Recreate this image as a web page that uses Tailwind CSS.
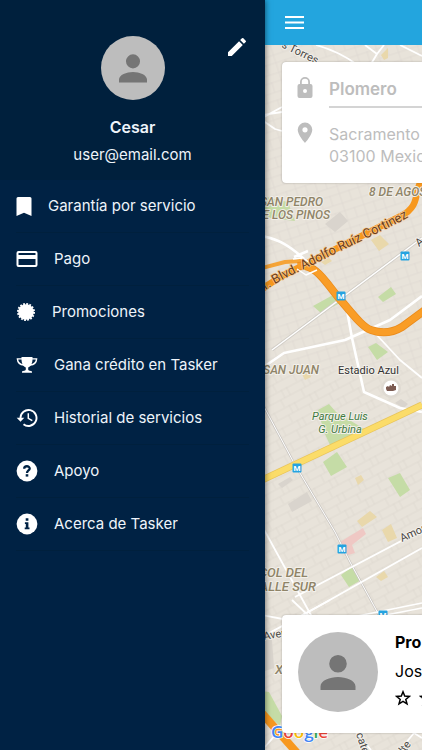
<!DOCTYPE html>
<html lang="es">
<head>
  <meta charset="UTF-8" />
  <meta name="viewport" content="width=device-width, initial-scale=1.0" />
  <title>Tasker</title>
  <script src="https://cdn.jsdelivr.net/npm/@tailwindcss/browser@4"></script>
</head>
<body class="flex min-h-screen overflow-x-hidden bg-[#002244] font-['Inter',sans-serif]">

  <!-- Menu lateral -->
  <aside class="relative z-10 w-[265px] shrink-0 bg-[#002244] text-[#eef4fa] shadow-[0_0_6px_rgba(0,0,0,0.6)]">
    <header class="relative flex h-[180px] flex-col items-center bg-[#00203d] pt-9">
      <svg class="size-16" viewBox="0 0 80 80">
        <circle cx="40" cy="40" r="40" fill="#bdbdbd" />
        <path fill="#757575" d="M40 40.500a8.800 8.800 0 1 0 0-17.600 8.800 8.800 0 0 0 0 17.600zm0 4.500c-8 0-17.500 3.500-17.500 9.500v3.500h35v-3.500c0-6-9.500-9.500-17.500-9.500z" />
      </svg>
      <h1 class="mt-[15px] text-base/6 font-semibold">Cesar</h1>
      <p class="mt-1 text-[15px]/6">user@email.com</p>
      <button aria-label="Editar perfil" class="absolute top-[35px] right-4 text-white">
        <svg class="size-6" viewBox="0 0 24 24" fill="currentColor"><path d="M3 17.250V21h3.750L17.810 9.940l-3.750-3.750L3 17.250zM20.710 7.040a1 1 0 0 0 0-1.410l-2.340-2.340a1 1 0 0 0-1.410 0l-1.830 1.830 3.750 3.750 1.830-1.830z" /></svg>
      </button>
    </header>

    <nav class="px-4 text-[15px]">
      <a href="#garantia" class="flex h-[53px] items-center gap-4 border-b border-[#00203d]">
        <svg class="h-[19px] w-4" viewBox="0 0 16 19" fill="#fff"><path d="M2 0h12a1.500 1.500 0 0 1 1.500 1.500V19L8 15.700.5 19V1.500A1.500 1.500 0 0 1 2 0z" /></svg>
        Garantía por servicio
      </a>
      <a href="#pago" class="flex h-[53px] items-center gap-4 border-b border-[#00203d]">
        <svg class="h-[18px] w-[22px]" viewBox="0 0 22 18"><path fill="#fff" fill-rule="evenodd" d="M2.500 1h17a2 2 0 0 1 2 2v12a2 2 0 0 1-2 2h-17a2 2 0 0 1-2-2V3a2 2 0 0 1 2-2zm0 2v2h17V3zm0 6v6h17V9z" /></svg>
        Pago
      </a>
      <a href="#promociones" class="flex h-[53px] items-center gap-4 border-b border-[#00203d]">
        <svg class="size-5" viewBox="0 0 20 20">
          <circle cx="10" cy="10" r="7.800" fill="#fff" />
          <circle cx="10" cy="10" r="8" fill="none" stroke="#fff" stroke-width="2" stroke-dasharray="1.800 1.342" />
        </svg>
        Promociones
      </a>
      <a href="#credito" class="flex h-[53px] items-center gap-4 border-b border-[#00203d]">
        <svg class="h-[18px] w-[22px]" viewBox="0 0 22 18">
          <path fill="#fff" d="M5.500 1h11v2c0 5-2 7.500-4.300 8.500v2c0 .8 1 1.200 2.800 1.500.8.100 1 .5 1 1v.8H6V16c0-.5.200-.9 1-1 1.800-.3 2.800-.7 2.800-1.500v-2C7.500 10.500 5.500 8 5.500 3z" />
          <path fill="none" stroke="#fff" stroke-width="1.400" d="M6 2.900H1.400C1.600 6.500 4 8.700 8 9M16 2.900h4.600C20.400 6.500 18 8.700 14 9" />
        </svg>
        Gana crédito en Tasker
      </a>
      <a href="#historial" class="flex h-[53px] items-center gap-4 border-b border-[#00203d]">
        <svg class="h-5 w-[22px]" viewBox="0 0 22 20">
          <path fill="none" stroke="#fff" stroke-width="1.900" d="M4.500 11v-1a8 8 0 1 1 3 6.200" />
          <path fill="#fff" d="M.7 9.800h7.600l-3.800 4z" />
          <path fill="none" stroke="#fff" stroke-width="1.500" d="M12.300 5.300v5l4 2.400" />
        </svg>
        Historial de servicios
      </a>
      <a href="#apoyo" class="flex h-[53px] items-center gap-4 border-b border-[#00203d]">
        <svg class="size-[22px]" viewBox="0 0 22 22">
          <circle cx="11" cy="11" r="10.400" fill="#fff" />
          <path fill="none" stroke="#002244" stroke-width="2.300" d="M8.200 8.700c0-3.300 5.500-3.200 5.500-.2 0 2-2.700 2-2.700 4.500" />
          <path fill="#002244" d="M9.700 14.200h2.600v2.400H9.700z" />
        </svg>
        Apoyo
      </a>
      <a href="#acerca" class="flex h-[53px] items-center gap-4 border-b border-[#00203d]">
        <svg class="size-[22px]" viewBox="0 0 22 22">
          <circle cx="11" cy="11" r="10.400" fill="#fff" />
          <path fill="#002244" d="M9.700 5.300h2.700v2.400H9.700zM8.900 9.200h3.500v5.300h1.100v1.700H8.700v-1.700h1.100v-3.600h-.9z" />
        </svg>
        Acerca de Tasker
      </a>
    </nav>
  </aside>

  <!-- Pantalla principal -->
  <main class="flex min-w-0 flex-1 flex-col overflow-hidden">
    <header class="flex h-[45px] shrink-0 items-center bg-[#23a5de] pl-5">
      <button aria-label="Menú" class="text-white">
        <svg class="h-[13px] w-[19px]" viewBox="0 0 19 13" fill="currentColor"><path d="M0 0h19v2H0zM0 5.500h19v2H0zM0 11h19v2H0z" /></svg>
      </button>
    </header>

    <div class="relative flex flex-1 flex-col justify-between bg-[#e8e3da] pt-[17px] pb-[17px] pl-[17px]">
      <!-- Mapa -->
      <svg class="absolute inset-0 size-full" viewBox="265 45 157 705" preserveAspectRatio="xMinYMin slice" font-family="Roboto, sans-serif">
        <defs>
          <pattern id="streets" width="23" height="17" patternUnits="userSpaceOnUse" patternTransform="rotate(-28)">
            <path d="M0 1H23M0 9H23M2 0V9M14 9V17M19 0V9" fill="none" stroke="#dcd7cf" stroke-width=".7" />
          </pattern>
          <pattern id="streetsTop" width="20" height="18" patternUnits="userSpaceOnUse" patternTransform="rotate(-18)">
            <path d="M0 1H20M0 11H20M3 0V18M13 0V11" fill="none" stroke="#ded9d1" stroke-width=".7" />
          </pattern>
          <path id="blvd" d="M260 295C268 287 280 281 300 271L400 222L412 215" />
          <g id="metro">
            <rect x="-4.500" y="-4.500" width="9" height="9" rx="1" fill="#25a3e0" />
            <text y="3" text-anchor="middle" font-size="8" font-weight="700" fill="#fff">M</text>
          </g>
        </defs>
        <rect x="265" y="45" width="900" height="325" fill="url(#streetsTop)" />
        <rect x="265" y="370" width="900" height="900" fill="url(#streets)" />

        <!-- parques y manzanas -->
        <g fill="#c5dca6">
          <path d="M262 196L288 202L295 221L262 217z" />
          <path d="M313 306L333 295L340 303L321 313zM378 297L391 287L396 294L383 302zM368 347L376 343L388 352L377 360z" />
          <path d="M318 410L329 404L336 412L366 430L330 445L324 432zM323 462L337 452L347 467L331 476zM388 478L400 473L410 490L400 497zM341 575L352 567L361 580L349 587z" />
          <path d="M262 691L269 692L282 716L280 726L262 710z" />
        </g>
        <g fill="#e9d8ab">
          <path d="M371 240L380 235L389 244L379 251zM321 262L329 258L332 261L325 265zM357 521L370 511L377 517L362 527zM382 530L391 524L397 538L388 542zM376 577L384 571L388 577L381 581zM302 374L309 371L311 377L305 380zM381 55L388 48L388 58L384 60z" />
          <path d="M355 478L361 475L364 480L358 485z" />
        </g>
        <path fill="#efc8c4" d="M340 542L363 528L366 534L352 545L355 553L345 556z" />
        <g fill="#d9d4cd">
          <path d="M325 224L340 212L348 221L335 232zM288 504L307 492L312 501L292 512zM278 484L290 477L293 480L282 488zM395 403L401 399L408 404L404 408z" />
          <path d="M262 640L272 640L274 668L262 672z" />
        </g>

        <!-- calles secundarias -->
        <g fill="none">
          <path d="M262 403L294 463L335 532L350 562L380 617" stroke="#c9c5c0" stroke-width="2.400" />
          <path d="M272 350L422 238" stroke="#d0ccc5" stroke-width="3" />
        </g>
        <g fill="none" stroke="#fff" stroke-width="1.800" stroke-linejoin="round">
          <path d="M272 350L422 238" stroke-width="1.400" />
          <path d="M262 403L294 463L335 532L350 562L380 617" stroke-width="1" />
          <path d="M262 236C280 240 290 246 304 259M294 257L308 251" stroke-width="2.600" />
          <path d="M262 368L284 353L345 340L390 320L422 296" stroke-width="2.600" />
          <path d="M346 305L352 338L364 392L400 408L422 412" stroke-width="2.600" />
          <path d="M374 332L400 360L422 378" />
          <path d="M262 526L312 617M295 597L422 530M296 619L422 548" />
          <path d="M338 620L422 603M345 623L422 608" stroke-width="1.600" />
          <path d="M316 45C330 49 345 56 356 64M365 45L377 54L384 45M377 54L371 64M400 45L422 56" />
          <path d="M262 118L282 107M262 120L275 129L282 131M262 115L282 112" />
          <path d="M292 600L312 619M262 637L330 600M265 747L282 727M400 750L414 733L422 738M355 731L371 750M262 615L288 620" />
        </g>

        <!-- avenidas -->
        <g fill="none" stroke-linejoin="round">
          <path d="M262 480L422 405" stroke="#e8c45a" stroke-width="7" />
          <path d="M262 480L422 405" stroke="#fbdc69" stroke-width="5.500" />
          <path d="M262 268L285 262L300 261L312 267" stroke="#f5a437" stroke-width="4" />
          <path d="M262 289L280 277L300 267L401 216C413 210 416 202 417 191L421 180" stroke="#f7981f" stroke-width="6.500" />
          <path d="M298 266C315 263 325 281 338 297C352 313 362 327 371 330C382 334 392 333 402 327L425 310" stroke="#ea8b1c" stroke-width="8" />
          <path d="M298 266C315 263 325 281 338 297C352 313 362 327 371 330C382 334 392 333 402 327L425 310" stroke="#f99d27" stroke-width="6.500" />
          <path d="M297 269L306 275L317 270M293 259L302 258L309 262" stroke="#fff" stroke-width="1.500" />
          <path d="M260 711L298 754" stroke="#f7981f" stroke-width="8" />
        </g>

        <use href="#metro" x="405" y="256" />
        <use href="#metro" x="341" y="296" />
        <use href="#metro" x="297" y="468" />
        <use href="#metro" x="342" y="549" />
        <use href="#metro" x="383" y="615" />

        <!-- estadio -->
        <circle cx="391" cy="388" r="10" fill="#dfdad2" />
        <circle cx="391" cy="388" r="7.500" fill="#fff" />
        <path fill="#7c5b52" d="M386 387l2-1 1 1 1-2 2 1v-2h2v2l2 0v4l-3 1h-6l-1-2z" />

        <!-- etiquetas -->
        <g stroke="#f3f0ea" stroke-width="2" stroke-linejoin="round" paint-order="stroke" fill="#8f8468" font-size="12" font-style="italic" font-weight="500">
          <text x="323" y="206" text-anchor="end">SAN PEDRO</text>
          <text x="330" y="219" text-anchor="end">DE LOS PINOS</text>
          <text x="369" y="196">8 DE AGOSTO</text>
          <text x="319" y="374" text-anchor="end">SAN JUAN</text>
          <text x="308" y="577" text-anchor="end" font-size="13">COL DEL</text>
          <text x="316" y="591" text-anchor="end" font-size="13">VALLE SUR</text>
          <text x="275" y="674" font-size="13">X</text>
          <g fill="#3f7a41" font-size="11" font-weight="400" text-anchor="middle">
            <text x="340" y="420">Parque Luis</text>
            <text x="340" y="433">G. Urbina</text>
          </g>
          <g fill="#484644" font-style="normal" font-weight="400" font-size="11">
            <text x="338" y="374" fill="#333">Estadio Azul</text>
            <text transform="translate(281 47) rotate(26)">s Torres</text>
            <text transform="translate(402 542) rotate(-25)">Amores</text>
            <text transform="translate(419 247) rotate(-40)">A</text>
            <text transform="translate(264 640) rotate(-10)">Aven</text>
            <text transform="translate(356 734) rotate(72)">cate</text>
            <text transform="translate(404 754) rotate(-52)">lte</text>
          </g>
          <text font-size="13" font-style="normal" font-weight="400" fill="#6b3c1a" stroke="#f8c88a" stroke-width="1.500"><textPath href="#blvd">nf. Blvd. Adolfo Ruíz Cortinez</textPath></text>
        </g>

        <text x="271" y="738" font-family="Open Sans, sans-serif" font-size="17" font-weight="600" stroke="#fff" stroke-width="1.500" paint-order="stroke"><tspan fill="#4285f4">G</tspan><tspan fill="#ea4335">o</tspan><tspan fill="#fbbc05">o</tspan><tspan fill="#4285f4">g</tspan><tspan fill="#34a853">l</tspan><tspan fill="#ea4335">e</tspan></text>
      </svg>

      <!-- Servicio y dirección -->
      <section class="relative h-[121px] rounded-l-sm bg-white pt-[14px] pl-[15px] text-[#bdbdbd] shadow-[0_0_2px_rgba(0,0,0,0.3)]">
        <div class="flex gap-4">
          <svg class="mt-px h-[21px] w-4 shrink-0" viewBox="0 0 16 21"><path fill="#bdbdbd" fill-rule="evenodd" d="M8 0a5 5 0 0 1 5 5v2h.5a2 2 0 0 1 2 2v10a2 2 0 0 1-2 2h-11a2 2 0 0 1-2-2V9a2 2 0 0 1 2-2H3V5a5 5 0 0 1 5-5zm0 1.800A3.200 3.200 0 0 0 4.800 5v2h6.400V5A3.200 3.200 0 0 0 8 1.800zM8 12a2 2 0 1 0 0 4 2 2 0 0 0 0-4z" /></svg>
          <input type="text" aria-label="Servicio" value="Plomero" readonly class="h-8 min-w-0 flex-1 border-b-2 border-[#d4d4d4] pb-1 text-[17px]/6 font-semibold outline-none" />
        </div>
        <div class="mt-3.5 flex gap-4">
          <svg class="h-[21px] w-4 shrink-0" viewBox="0 0 16 21"><path fill="#bdbdbd" fill-rule="evenodd" d="M8 .5a7.300 7.300 0 0 1 7.300 7.300C15.300 13 8 21 8 21S.7 13 .7 7.800A7.300 7.300 0 0 1 8 .5zm0 4.700a2.600 2.600 0 1 0 0 5.200 2.600 2.600 0 0 0 0-5.200z" /></svg>
          <p class="mt-px text-base/[22px] whitespace-nowrap">Sacramento<br />03100 Mexico</p>
        </div>
      </section>

      <!-- Profesional -->
      <section class="relative flex h-[118px] items-start gap-[17px] overflow-hidden rounded-l-sm bg-white pt-[17px] pl-4 shadow-[0_0_2px_rgba(0,0,0,0.3)]">
        <svg class="size-20 shrink-0" viewBox="0 0 80 80">
          <circle cx="40" cy="40" r="40" fill="#bdbdbd" />
          <path fill="#757575" d="M40 40.500a8.800 8.800 0 1 0 0-17.600 8.800 8.800 0 0 0 0 17.600zm0 4.500c-8 0-17.500 3.500-17.500 9.500v3.500h35v-3.500c0-6-9.500-9.500-17.500-9.500z" />
        </svg>
        <div class="whitespace-nowrap text-black">
          <h2 class="text-base/5 font-bold">Pro</h2>
          <p class="mt-2 text-base/[22px]">Jos</p>
          <div class="mt-2 flex gap-2">
            <svg class="size-4 shrink-0" viewBox="0 0 16 16" fill="none" stroke="#000" stroke-width="1.500"><path d="M8 1.800l1.700 4.300 4.700.3-3.600 3 1.200 4.500L8 11.400l-4 2.500 1.200-4.500-3.600-3 4.700-.3z" /></svg>
            <svg class="size-4 shrink-0" viewBox="0 0 16 16" fill="none" stroke="#000" stroke-width="1.500"><path d="M8 1.800l1.700 4.300 4.700.3-3.600 3 1.200 4.500L8 11.400l-4 2.500 1.200-4.500-3.600-3 4.700-.3z" /></svg>
          </div>
        </div>
      </section>
    </div>
  </main>

</body>
</html>
